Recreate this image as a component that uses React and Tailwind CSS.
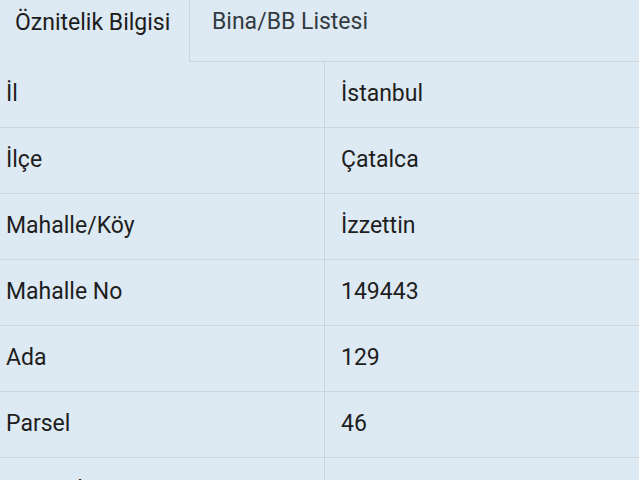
import React from "react";

const rows = [
  ["İl", "İstanbul"],
  ["İlçe", "Çatalca"],
  ["Mahalle/Köy", "İzzettin"],
  ["Mahalle No", "149443"],
  ["Ada", "129"],
  ["Parsel", "46"],
  ["Tapu Alanı", "5.620,00"],
];

export default function App() {
  return (
    <div className="w-[639px] h-[480px] overflow-hidden bg-[#deeaf3] text-[#1e1e1e] font-['Roboto',sans-serif]">
      <div className="flex h-[62px]">
        <div className="w-[189px] pl-[15px] pt-[8px] text-[23px] leading-[30px] text-[#1c1c1c]">
          Öznitelik Bilgisi
        </div>
        <div className="flex-1 border-l border-b border-[#c9d4dd] pl-[22px] pt-[7px] text-[23px] leading-[30px] text-[#333b42]">
          Bina/BB Listesi
        </div>
      </div>
      {rows.map(([k, v]) => (
        <div key={k} className="flex h-[66px] border-b border-[#cbd6df]">
          <div className="w-[325px] border-r border-[#c9d4dd] pl-[6px] flex items-center text-[23px]">
            {k}
          </div>
          <div className="flex-1 pl-[16px] flex items-center text-[23px]">{v}</div>
        </div>
      ))}
    </div>
  );
}
